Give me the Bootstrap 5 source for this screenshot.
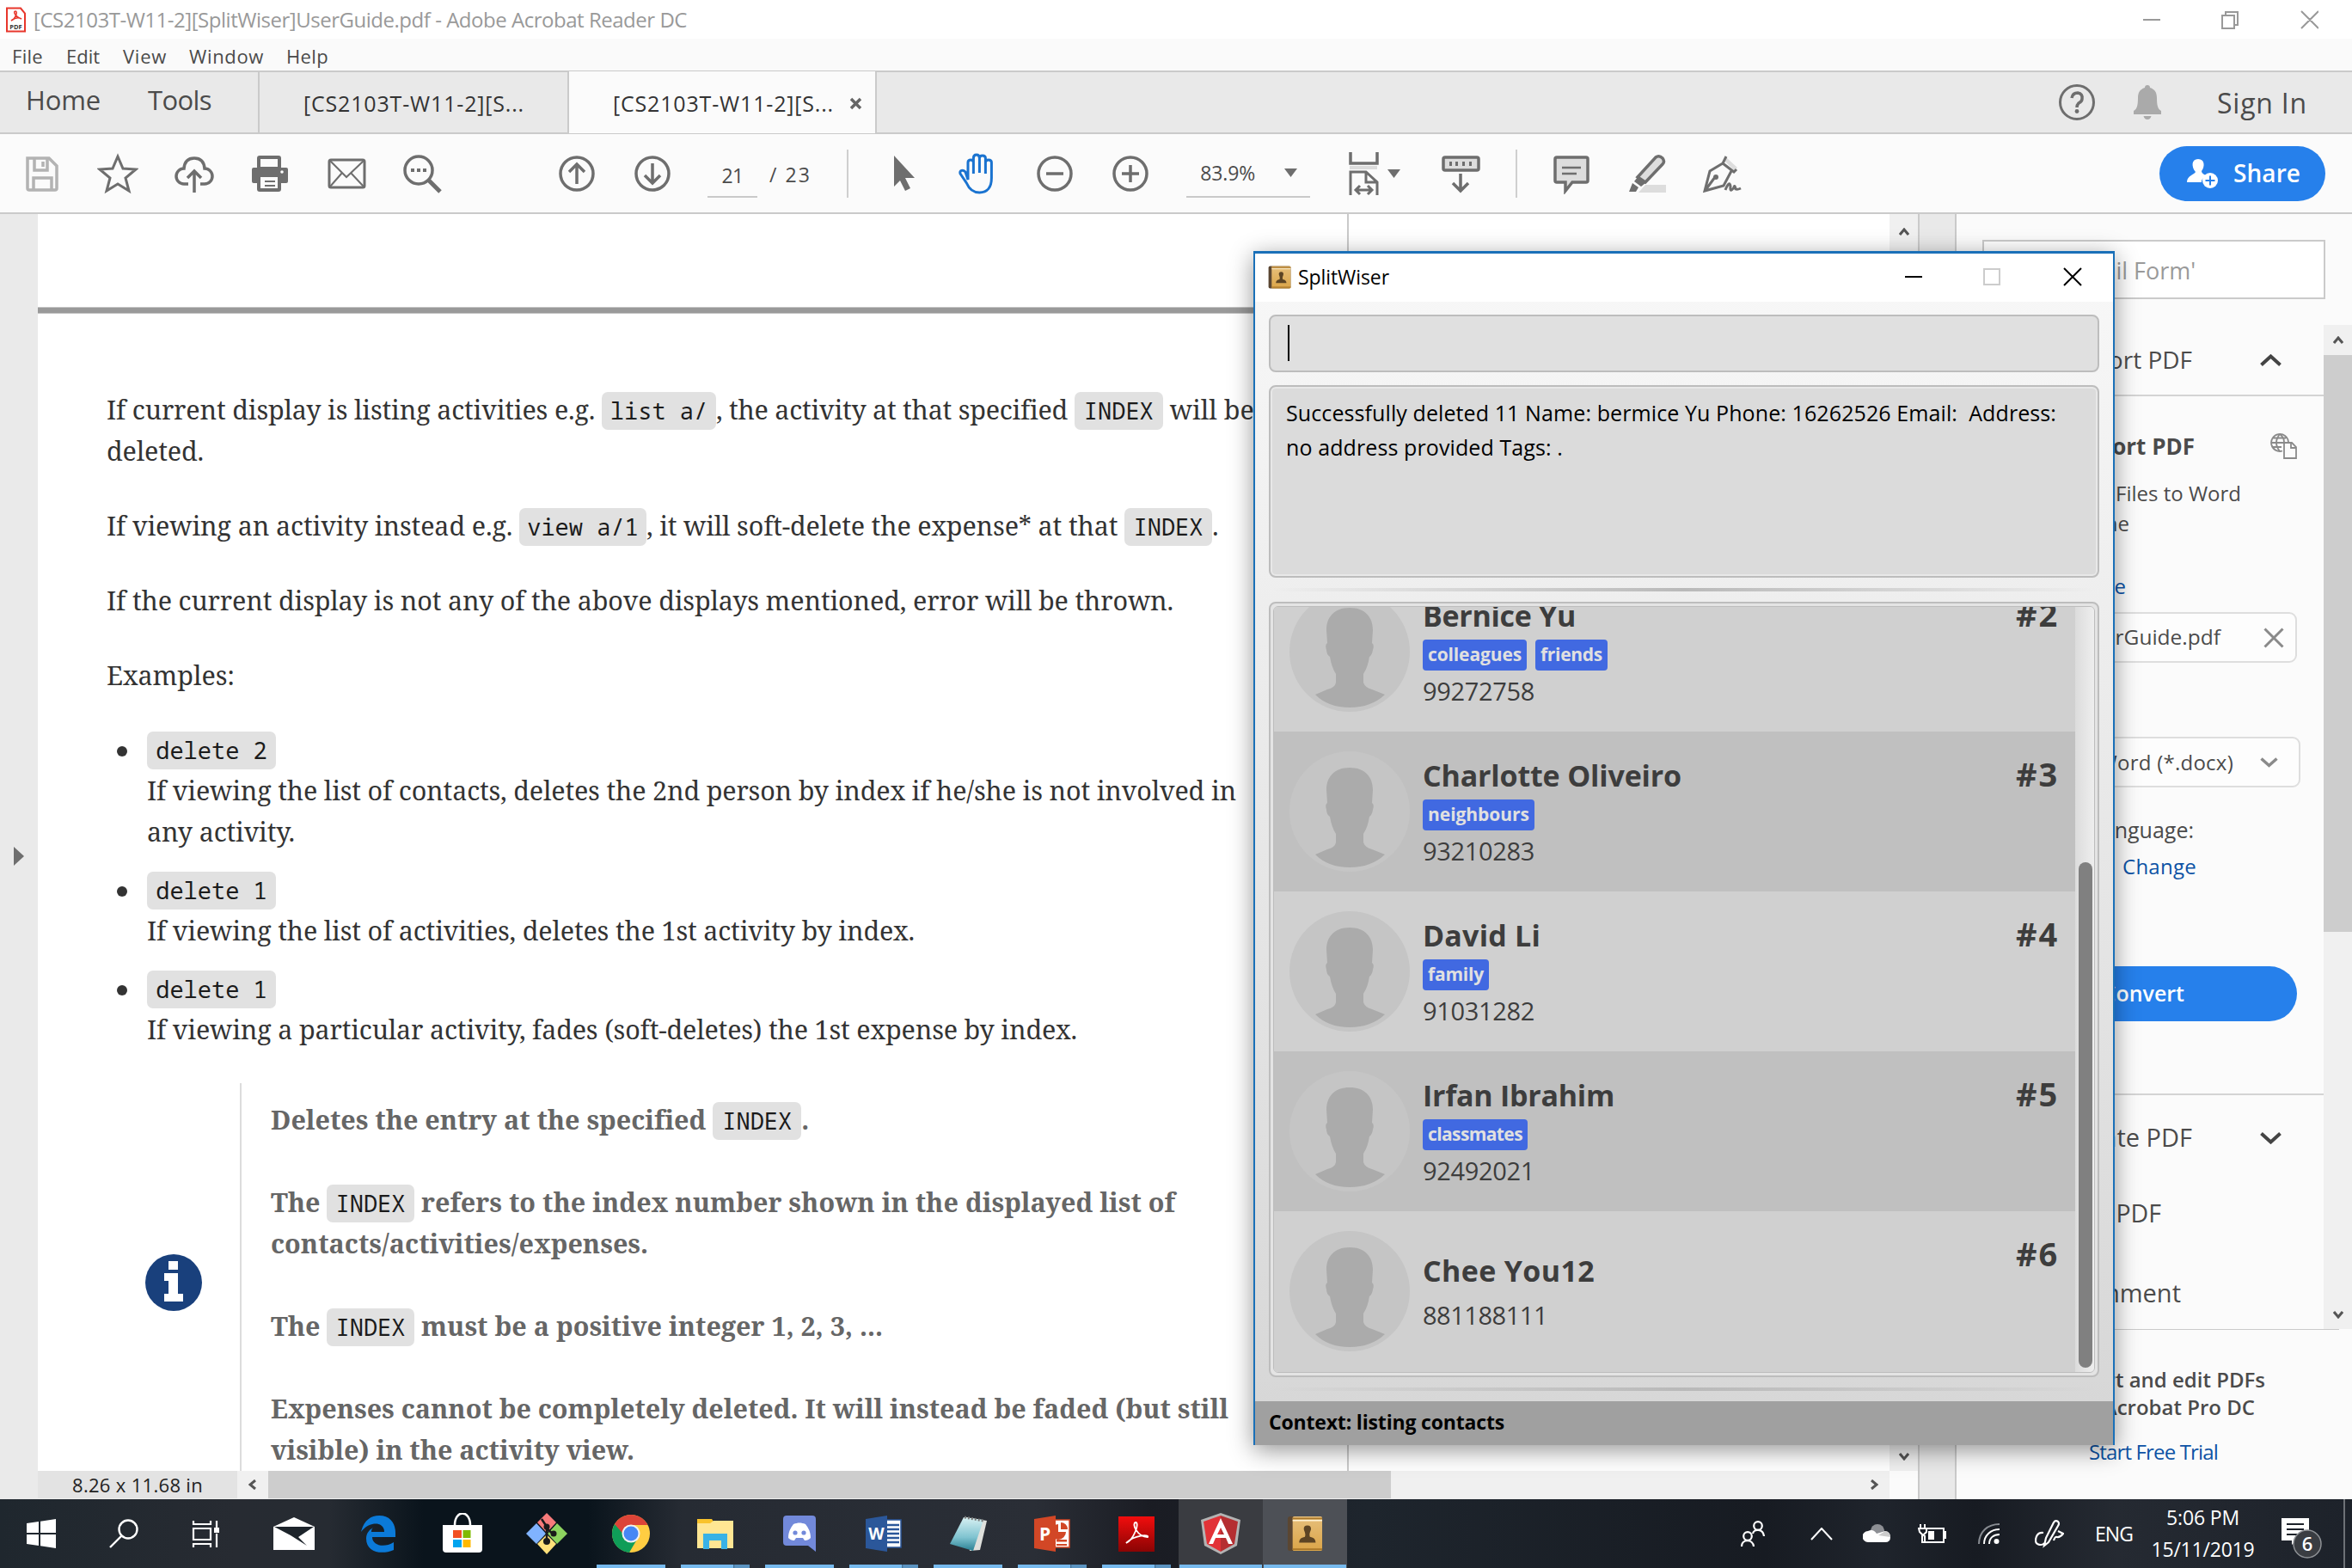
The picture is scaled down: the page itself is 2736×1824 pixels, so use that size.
<!DOCTYPE html>
<html lang="en">
<head>
<meta charset="utf-8">
<title>UserGuide.pdf - Adobe Acrobat Reader DC</title>
<link href="https://cdn.jsdelivr.net/npm/bootstrap@5.3.0/dist/css/bootstrap.min.css" rel="stylesheet">
<style>
html,body{height:1824px;width:2736px;overflow:hidden}
body{font-family:"Open Sans","Noto Sans",sans-serif;font-size:25px;color:#4b4b4b;background:#fbfbfb;line-height:1.4}
svg{display:block;flex:none}
[data-w],.nw{white-space:pre;display:inline-block}
.titlebar{height:45px;background:#fff;color:#999;padding-left:6px;font-size:24px}
.menus{height:39px;background:#fafafa;border-bottom:2px solid #cacaca;font-size:22px;padding:3px 0 0 14px;color:#4a4a4a}
.tabs{height:72px;background:#e9e9e9;border-bottom:2px solid #cacaca}
.homes{width:300px;font-size:31px;padding-left:30px;padding-bottom:4px;gap:55px}
.doctab{width:360px;border-left:2px solid #cacaca;font-size:25px;color:#333;height:72px;padding:3px 0 0 51px}
.doctab.on{background:#fbfbfb;border-right:2px solid #cacaca}
.tools{height:93px;background:#fbfbfb;border-bottom:2px solid #cacaca;padding-left:25px}
.grp{gap:40.4px}
.fld{border-bottom:2px solid #cacaca;height:57px;font-size:23px;line-height:62px}
.vline{width:2px;height:56px;background:#cfcfcf}
.share{width:193px;height:64px;border-radius:32px;background:#2680eb;color:#fff;font-weight:600;font-size:28px;margin-right:31px;padding-left:32px;gap:17px}
.mainrow{height:1495px}
.strip{width:44px;background:#eaeaea;padding:736px 0 0 16px}
.docw{width:2187px}
.paper{height:1462px;width:2154px;background:#fff;overflow:hidden}
.paperin{width:1525px;border-right:2px solid #cacaca;height:1462px}
.brk{height:8px;background:#999;border-top:1px solid #c4c4c4;border-bottom:1px solid #c4c4c4;margin-top:108px}
.prose{padding:89px 0 0 80px;font-family:"Noto Serif","DejaVu Serif Condensed","DejaVu Serif",serif;font-size:30.5px;color:#333}
.tl{height:48px;line-height:48px;display:flex;align-items:center;white-space:pre}
.tl>span:not(.kbdx){margin-top:-4px}
.para{margin-bottom:39px}
.kbdx{font-family:"Noto Sans Mono","DejaVu Sans Mono",monospace;font-size:27px;font-weight:400;color:#1b1b1b;background:#e1e1e1;border-radius:7px;height:44px;line-height:44px;text-align:center;display:inline-block;white-space:pre}
.item{padding-left:47px;margin-bottom:19px;position:relative}
.item::before{content:"";position:absolute;left:12px;top:19px;width:12px;height:12px;border-radius:50%;background:#333}
.note{margin-top:37px;gap:0}
.noteico{width:155px;padding:199px 0 0 45px}
.notetx{border-left:2px solid #dcdcdc;padding:20px 0 0 34px;font-weight:700;color:#666}
.notetx .para{margin-bottom:48px}
.vsb{width:33px;background:#f0f0f0;height:1462px;padding:16px 0 12px}
.hsb{height:33px;background:#f0f0f0;border-bottom:1px solid #eee}
.dims{width:232px;background:#e3e3e3;font-size:22px;color:#222;padding-left:40px}
.gut{width:45px;background:#e9e9e9;border:solid #cacaca;border-width:0 2px}
.rp{width:460px;background:#fbfbfb;color:#4b4b4b}
.srch{margin:30px 0 30px 30px;width:399px;height:69px;border:2px solid #cacaca;background:#fff;color:#9a9a9a;font-size:27px;line-height:68px;padding-right:160px;white-space:nowrap}
.acc{width:427px;height:1168px}
.ln{line-height:35px;font-size:24px;text-align:right;white-space:nowrap}
.lk{color:#0d53a5}
.bx{border:2px solid #dedede;border-radius:9px;background:#fdfdfd;font-size:24px}
.cv{height:64px;border-radius:32px;background:#2680eb;color:#fff;font-weight:600;font-size:25px;line-height:62px;text-align:right}
.sb2{width:33px;background:#f0f0f0}
.foot2{border-top:1px solid #cacaca;width:445px;padding-top:42px;font-weight:600}
/* floating application window */
.win{position:absolute;left:1458px;top:292px;width:1002px;height:1389px;border:2px solid #1a70b8;border-top-width:3px;border-bottom-width:3px;box-shadow:0 6px 26px rgba(0,0,0,.42);background:linear-gradient(#f8f8f8,#d6d6d6);color:#000}
.wt{height:56px;background:#fff;font-size:23px;padding:0 36px 2px 15px}
.cmd{margin:15px 16px 0;height:67px;border:2px solid #bdbdbd;border-radius:8px;background:#e0e0e0;padding:10px 0 0 20px}
.cmd i{display:block;width:2px;height:42px;background:#000}
.outp{margin:15px 16px 0;height:224px;border:2px solid #bdbdbd;border-radius:8px;background:#dbdbdb;box-shadow:inset 0 0 0 2px #e8e8e8;font-size:25px;line-height:40px;padding:10px 0 0 18px}
.dv{height:4px;background:linear-gradient(90deg,transparent 2%,#b9b9b9 50%,transparent 98%)}
.lst{margin:12px 16px 0;height:902px;border:2px solid #bdbdbd;border-radius:8px;background:#e4e4e4;padding:3px}
.lin{height:892px;border:1px solid #bdbdbd;border-radius:6px;overflow:hidden}
.cells{width:934px;display:flex;flex-direction:column;justify-content:flex-end;padding-bottom:1px;background:#d0d0d0}
.cellx{height:186px;flex:none;padding-left:18px;background:#d0d0d0;color:#3d3d3d}
.cellx.alt{background:#c0c0c0}
.inf{margin-left:15px;width:690px;padding-top:31px}
.nm{font-weight:700;font-size:34px;line-height:40px;height:40px}
.tg{background:#4169e1;color:#e0e0e0;border-radius:4px;font-weight:700;font-size:21px;height:36px;line-height:34px;padding:0 6px}
.ph{font-size:29px;line-height:40px;margin-top:4px}
.idx{font-weight:700;font-size:38px;line-height:40px;padding-top:29px}
.thumb{width:16px;margin:297px 0 0 4px;height:588px;border-radius:8px;background:#808080}
.trk{width:22px;background:linear-gradient(90deg,#dcdcdc,#eee)}
.stat{height:51px;margin-top:12px;background:#a0a0a0;font-weight:700;font-size:23px;line-height:49px;padding-left:16px}
/* taskbar */
.tb{height:80px;color:#fff;background:linear-gradient(90deg,#1f272e 0,#272b32 10%,#262b32 14%,#0a141c 18%,#0a141c 25%,#262b33 29%,#2a2e36 44%,#1a1c23 49%,#1e252d 58%,#171b22 75%,#1f242c 80%,#171b22 84%,#252a32 90%,#1d222a 100%)}
.t1{width:96px}.t2{width:98px;position:relative}
.t1,.t2{height:80px;display:flex;align-items:center;justify-content:center}
.run::after{content:"";position:absolute;left:9px;bottom:0;width:80px;height:4px;background:#76b9ed}
.multi::after{background:linear-gradient(90deg,#76b9ed 61px,#3f678a 61px,#5b93c0 63px)}
.act::after{left:1px;width:96px}
.clock{font-size:23px;line-height:37px;text-align:center;width:121px}
</style>
<script src="https://cdn.jsdelivr.net/npm/bootstrap@5.3.0/dist/js/bootstrap.bundle.min.js"></script>
</head>
<body class="d-flex flex-column">
<svg width="0" height="0" class="position-absolute"><defs>
<symbol id="up" viewBox="0 0 12 10"><path d="M1 8l5-6 5 6" fill="none" stroke="#555" stroke-width="3"/></symbol>
<symbol id="ava" viewBox="0 0 140 140"><circle cx="70" cy="70" r="70" fill="#c5c5c5"/><path fill="#ababab" d="M70 19C88 19 97 30 97 45L96 60Q99 62 97 68Q96 74 93 76Q91 88 87 94L86 96V106Q88 112 96 114L111 120Q95 135 70 135Q45 135 30 120L44 114Q53 112 54 106V96Q49 88 47 76Q43 73 43 68Q41 62 44 60L43 45C43 30 52 19 70 19Z"/></symbol>
<linearGradient id="gold" x2="0" y2="1"><stop stop-color="#e6bf7c"/><stop offset="1" stop-color="#dba548"/></linearGradient>
<symbol id="book" viewBox="0 0 44 44"><rect x="1" y="1" width="42" height="42" rx="3" fill="#5a4632"/><rect x="7" y="1" width="36" height="42" rx="2" fill="url(#gold)"/><path d="M7 3.500h36M7 41h36" stroke="#a8772a" stroke-width="2"/><path d="M7 6h36" stroke="#fff3d5" stroke-width="1.500"/><path fill="#5c4424" d="M25 12c4 0 5 3 4 6-1 3-2 4-1 8 5 1 7 3 7 7H15c0-4 2-6 7-7 1-4 0-5-1-8-1-3 0-6 4-6z"/></symbol>
</defs></svg>

<header class="titlebar d-flex align-items-center">
 <svg width="25" height="30" viewBox="0 0 25 30"><path d="M2 1.500h16l5 6v21H2z" fill="#fff" stroke="#e8372c" stroke-width="2"/><path d="M7 16c5-2 8-11 5-11s-1 6 7 9c-3-2-8-1-12 2z" fill="none" stroke="#e8372c" stroke-width="1.600"/><text x="12.500" y="26" font-size="7.500" font-weight="700" text-anchor="middle" fill="#333">PDF</text></svg>
 <span data-w="760" style="margin-left:8px">[CS2103T-W11-2][SplitWiser]UserGuide.pdf - Adobe Acrobat Reader DC</span>
 <svg class="ms-auto" style="margin-right:39px" width="204" height="22" viewBox="0 0 204 22" fill="none" stroke="#999" stroke-width="2"><path d="M0 11h20M92 6h14v15H92zM96 6V2h14v15h-4M184 1l20 20M204 1l-20 20"/></svg>
</header>
<nav class="menus d-flex align-items-center"><span data-w="36">File</span><span data-w="39" style="margin-left:27px">Edit</span><span data-w="51" style="margin-left:27px">View</span><span data-w="87" style="margin-left:26px">Window</span><span data-w="49" style="margin-left:26px">Help</span></nav>
<div class="tabs d-flex align-items-center">
 <div class="homes d-flex"><span data-w="87">Home</span><span data-w="74">Tools</span></div>
 <div class="doctab d-flex align-items-center"><span data-w="257">[CS2103T-W11-2][S...</span></div>
 <div class="doctab on d-flex align-items-center"><span data-w="257">[CS2103T-W11-2][S...</span><svg style="margin-left:18px" width="15" height="15" viewBox="0 0 15 15"><path d="M2 2l11 11M13 2L2 13" stroke="#666" stroke-width="3.500"/></svg></div>
 <svg class="ms-auto" width="44" height="44" viewBox="0 0 44 44"><circle cx="22" cy="22" r="19.500" fill="none" stroke="#6e6e6e" stroke-width="3"/><path d="M16 17q1-6 7-6 6 1 5 7 0 3-4 5-2 2-2 5" fill="none" stroke="#6e6e6e" stroke-width="3.500"/><circle cx="22" cy="32.500" r="2.400" fill="#6e6e6e"/></svg>
 <svg style="margin-left:43px" width="34" height="42" viewBox="0 0 34 42" fill="#aaa"><path d="M14 4q0-3 3-3t3 3c6 2 8 6 8 12 0 8 1 13 5 15v4H1v-4c4-2 5-7 5-15 0-6 2-10 8-12zM12.500 37h9q-1 4-4.500 4t-4.500-4z"/></svg>
 <span data-w="105" style="font-size:32px;margin:2px 52px 0 64px">Sign In</span>
</div>
<div class="tools d-flex align-items-center">
 <div class="d-flex grp">
 <svg width="48" height="48" viewBox="0 0 48 48" fill="none" stroke="#b3b3b3" stroke-width="3.500"><path d="M7 6h25l9 9v26q0 2-2 2H9q-2 0-2-2z"/><path d="M15 6v14h15V6M14 43V29h21v14"/><path d="M25 10v6"/></svg>
 <svg width="48" height="48" viewBox="0 0 48 48" fill="none" stroke="#6e6e6e" stroke-width="3"><path d="M24 4l6 14 15 1-12 10 4 15-13-8-13 8 4-15L3 19l15-1z"/></svg>
 <svg width="48" height="48" viewBox="0 0 48 48" fill="none" stroke="#6e6e6e" stroke-width="3.500"><path d="M17 36h-5a9 9 0 0 1 0-18q1-12 12-12t12 12a9 9 0 0 1 0 18h-5M24 46V22M16 29l8-8 8 8"/></svg>
 <svg width="48" height="48" viewBox="0 0 48 48" fill="#6e6e6e"><path d="M9 18V6q0-3 3-3h22q3 0 3 3v12zm4-2h20V7H13z" fill-rule="evenodd"/><path d="M5 17h38q2 0 2 2v14q0 2-2 2h-6v7q0 3-3 3H12q-3 0-3-3v-7H5q-2 0-2-2V19q0-2 2-2z"/><path d="M13 28h20v13H13z" fill="#fbfbfb"/><path d="M18 33h12M18 38h12" stroke="#6e6e6e" stroke-width="2"/><circle cx="38" cy="22" r="1.800" fill="#fff"/></svg>
 <svg width="48" height="48" viewBox="0 0 48 48" fill="none" stroke="#6e6e6e" stroke-width="3"><rect x="4" y="8" width="41" height="32" rx="2"/><path d="M5 9l19 19L44 9M5 39l14-16M44 39L29 23" stroke-width="2"/></svg>
 <svg width="48" height="48" viewBox="0 0 48 48" fill="none" stroke="#6e6e6e"><circle cx="20" cy="20" r="16" stroke-width="3.500"/><path d="M31 31l14 14" stroke-width="5"/><path d="M11 20h4M18 20h4M25 20h4" stroke-width="4"/></svg>
 </div>
 <div class="d-flex" style="margin-left:132px;gap:40px">
 <svg width="48" height="48" viewBox="0 0 48 48" fill="none" stroke="#6e6e6e" stroke-width="3.500"><circle cx="24" cy="24" r="19"/><path d="M24 36V14M15 22l9-9 9 9"/></svg>
 <svg width="48" height="48" viewBox="0 0 48 48" fill="none" stroke="#6e6e6e" stroke-width="3.500"><circle cx="24" cy="24" r="19"/><path d="M24 12v22M15 26l9 9 9-9"/></svg>
 </div>
 <div class="fld text-center" style="width:58px;margin-left:40px"><span data-w="25">21</span></div>
 <div style="margin:4px 0 0 14px;font-size:23px" data-w="49">/ 23</div>
 <div class="vline" style="margin-left:41px"></div>
 <div class="d-flex grp" style="margin-left:39px">
 <svg width="48" height="48" viewBox="0 0 48 48" fill="#6e6e6e"><path d="M14 3l24 26H27l6 12-6 3-6-12-7 7z"/></svg>
 <svg width="48" height="48" viewBox="0 0 48 48" fill="none" stroke="#1a73d0" stroke-width="3"><path d="M13 29V10q0-3 3-3t3 3v14M19 24V6q0-4 3.500-4T26 6v17M26 23V7q0-3 3.500-3T33 7v18M33 25V13q0-3 3-3 4 0 4 4-1 8 3 0v15c1 12-5 18-15 18-8 0-12-4-15-11L4 25c-1-4 3-6 6-2l5 8" style="display:none"/><path d="M12 30V11q0-3 3-3t3 3v13M18 22V6q0-4 3.500-4T25 6v17M25 20V6q0-3 3.500-3T32 6v18M32 22V11q0-3 3.500-3T39 11q2 0 5 0" style="display:none"/><path d="M12 31V11q0-3 3.200-3t3.200 3v13V6q0-4 3.500-4t3.500 4v17V6q0-3 3.500-3t3.500 3v18V11q0-3 3.500-3t3.500 3v18c0 11-5 17-14 17-8 0-12-4-15-11L3 24c-1-4 3-5 6-2z"/></svg>
 <svg width="48" height="48" viewBox="0 0 48 48" fill="none" stroke="#6e6e6e" stroke-width="3.500"><circle cx="24" cy="24" r="19"/><path d="M14 24h20"/></svg>
 <svg width="48" height="48" viewBox="0 0 48 48" fill="none" stroke="#6e6e6e" stroke-width="3.500"><circle cx="24" cy="24" r="19"/><path d="M14 24h20M24 14v20"/></svg>
 </div>
 <div class="fld d-flex align-items-center" style="width:144px;margin-left:41px;padding-left:16px"><span data-w="64">83.9%</span><svg style="margin-left:34px" width="15" height="10" viewBox="0 0 15 10"><path d="M0 0h15L7.500 10z" fill="#6e6e6e"/></svg></div>
 <svg style="margin-left:38px" width="48" height="52" viewBox="0 0 48 52" fill="none" stroke="#6e6e6e" stroke-width="3.500"><path d="M9 1v13h31V1"/><path d="M8 19h32" stroke="#dcdcdc" stroke-width="4"/><path d="M9 51V24h18l13 12v15M27 24v12h12M15 45h19M20 40l-5 5 5 5M29 40l5 5-5 5" stroke-width="3"/></svg>
 <svg style="margin-left:4px" width="15" height="10" viewBox="0 0 15 10"><path d="M0 0h15L7.500 10z" fill="#6e6e6e"/></svg>
 <svg style="margin-left:46px" width="48" height="48" viewBox="0 0 48 48" fill="none" stroke="#6e6e6e" stroke-width="3.500"><rect x="4" y="5" width="41" height="15" rx="2" fill="#ddd"/><path d="M11 12.500h3M18 12.500h3M26 12.500h3M34 12.500h3" stroke-width="5"/><path d="M24 24v19M15 35l9 9 9-9"/></svg>
 <div class="vline" style="margin-left:40px"></div>
 <div class="d-flex" style="margin-left:39px;gap:40px">
 <svg width="48" height="48" viewBox="0 0 48 48" fill="#ddd" stroke="#6e6e6e" stroke-width="3.500"><path d="M7 5h34q2 0 2 2v25q0 2-2 2H25l-8 10V34H7q-2 0-2-2V7q0-2 2-2z"/><path d="M13 17h22M13 24h17" stroke-width="2.500"/></svg>
 <svg width="48" height="48" viewBox="0 0 48 48" fill="#ddd" stroke="#6e6e6e" stroke-width="3.500"><path d="M14 46l8-9h24v9z" stroke="none"/><path d="M13 28L34 5q4-3 8 1 3 4 0 7L22 34z"/><path d="M13 28l9 7-5 4-8-6zM7 35l7 5-3 5H3z" fill="#6e6e6e" stroke="none"/></svg>
 <svg width="48" height="48" viewBox="0 0 48 48" fill="none" stroke="#6e6e6e" stroke-width="3"><path d="M28 5l13 12-4 3L26 9z" fill="#ddd" stroke="none"/><path d="M28 4l-4 8 13 10 3-3M24 12L9 21 3 44l22-6 9-17M4 43l11-15" /><circle cx="16" cy="28" r="3" fill="#6e6e6e" stroke="none"/><path d="M27 43q5-12 6-4-1 8 4 1 1-4 2 2 2 1 6-1"/></svg>
 </div>
 <div class="share ms-auto d-flex align-items-center"><svg width="37" height="36" viewBox="0 0 37 36" fill="#fff"><path d="M13 1c8 0 8 9 4 14 0 3 4 4 6 6-5 2-6 4-6 7H0c0-8 9-9 10-12C5 10 5 1 13 1z"/><circle cx="27" cy="26" r="9"/><path d="M27 20.500v11M21.500 26h11" stroke="#2680eb" stroke-width="2"/></svg><span data-w="78">Share</span></div>
</div>

<main class="mainrow d-flex">
 <div class="strip"><svg width="12" height="22" viewBox="0 0 12 22"><path d="M0 0l12 11L0 22z" fill="#6e6e6e"/></svg></div>
 <div class="docw">
  <div class="d-flex">
  <div class="paper"><div class="paperin overflow-hidden"><div class="brk"></div>
   <article class="prose">
    <div class="para"><div class="tl"><span data-w="576">If current display is listing activities e.g. </span><span class="kbdx" style="width:133px">list a/</span><span data-w="416">, the activity at that specified </span><span class="kbdx" style="width:103px">INDEX</span><span data-w="106"> will be</span></div><div class="tl"><span data-w="113">deleted.</span></div></div>
    <div class="para tl"><span data-w="480">If viewing an activity instead e.g. </span><span class="kbdx" style="width:148px">view a/1</span><span data-w="556">, it will soft-delete the expense* at that </span><span class="kbdx" style="width:102px">INDEX</span><span>.</span></div>
    <div class="para tl"><span data-w="1241">If the current display is not any of the above displays mentioned, error will be thrown.</span></div>
    <div class="tl" style="margin-bottom:38px"><span data-w="149">Examples:</span></div>
    <div class="item"><div class="tl"><span class="kbdx" style="width:150px">delete 2</span></div><div class="tl"><span data-w="1267">If viewing the list of contacts, deletes the 2nd person by index if he/she is not involved in</span></div><div class="tl"><span data-w="172">any activity.</span></div></div>
    <div class="item"><div class="tl"><span class="kbdx" style="width:150px">delete 1</span></div><div class="tl"><span data-w="893">If viewing the list of activities, deletes the 1st activity by index.</span></div></div>
    <div class="item mb-0"><div class="tl"><span class="kbdx" style="width:150px">delete 1</span></div><div class="tl"><span data-w="1082">If viewing a particular activity, fades (soft-deletes) the 1st expense by index.</span></div></div>
    <div class="note d-flex"><div class="noteico"><svg width="66" height="66" viewBox="0 0 66 66"><circle cx="33" cy="33" r="33" fill="#19407c"/><path fill="#fff" d="M27 8h11v10H27zM22 22h16v24h6v9H22v-9h5V31h-5z"/></svg></div>
     <div class="notetx">
      <div class="para tl"><span data-w="513">Deletes the entry at the specified </span><span class="kbdx" style="width:103px">INDEX</span><span>.</span></div>
      <div class="para"><div class="tl"><span data-w="65">The </span><span class="kbdx" style="width:102px">INDEX</span><span data-w="885"> refers to the index number shown in the displayed list of</span></div><div class="tl"><span data-w="439">contacts/activities/expenses.</span></div></div>
      <div class="para tl"><span data-w="65">The </span><span class="kbdx" style="width:102px">INDEX</span><span data-w="545"> must be a positive integer 1, 2, 3, ...</span></div>
      <div><div class="tl"><span data-w="1114">Expenses cannot be completely deleted. It will instead be faded (but still</span></div><div class="tl"><span data-w="423">visible) in the activity view.</span></div></div>
     </div></div>
   </article></div></div>
  <div class="vsb d-flex flex-column align-items-center justify-content-between"><svg width="12" height="10"><use href="#up"/></svg><svg width="12" height="10" style="transform:scaleY(-1)"><use href="#up"/></svg></div>
  </div>
  <div class="d-flex">
   <div class="hsb d-flex" style="width:2154px"><div class="dims d-flex align-items-center"><span data-w="152">8.26 x 11.68 in</span></div>
    <div class="d-flex align-items-center justify-content-center" style="width:36px"><svg width="12" height="10" style="transform:rotate(-90deg)"><use href="#up"/></svg></div>
    <div style="width:1306px;background:#cdcdcd"></div>
    <div class="ms-auto d-flex align-items-center justify-content-center" style="width:36px"><svg width="12" height="10" style="transform:rotate(90deg)"><use href="#up"/></svg></div></div>
  </div>
 </div>
 <div class="gut"></div>
 <aside class="rp">
  <div class="srch text-end">Search 'Email Form'</div>
  <div class="d-flex">
   <div class="acc">
    <div class="d-flex align-items-center justify-content-end" style="height:83px;border-bottom:2px solid #d4d4d4;font-size:28px;padding-right:49px">Export PDF<svg style="margin-left:79px" width="25" height="14" viewBox="0 0 25 14"><path d="M1.500 12.500l11-10 11 10" fill="none" stroke="#444" stroke-width="4"/></svg></div>
    <div class="d-flex align-items-center justify-content-end fw-bold" style="height:40px;margin-top:38px;font-size:26px;padding-right:31px">Export PDF<svg style="margin-left:88px" width="31" height="30" viewBox="0 0 31 30" fill="none" stroke="#8a8a8a" stroke-width="1.800"><path d="M14 20.500A10 10 0 1 1 21 10M1 11h18M3 5.500h15M3 16h10M11 1q-8 10 0 20M11 1q5 4 5 9"/><path d="M16 11h9l5 5v13H16z" fill="#fbfbfb"/><path d="M24 11v6h6"/></svg></div>
    <div class="ln" style="margin-top:17px;padding-right:96px">Convert PDF Files to Word</div>
    <div class="ln" style="padding-right:226px">or Excel Online</div>
    <div class="ln lk" style="margin-top:38px;padding-right:230px">Learn more</div>
    <div class="bx d-flex align-items-center justify-content-end" style="height:59px;margin:13px 31px 0 30px;padding-right:13px;font-size:24.500px">...UserGuide.pdf<svg style="margin-left:50px" width="24" height="24" viewBox="0 0 24 24"><path d="M1.500 1.500l21 21M22.500 1.500l-21 21" stroke="#8a8a8a" stroke-width="3"/></svg></div>
    <div class="bx d-flex align-items-center justify-content-end" style="height:59px;margin:86px 27px 0 30px;padding-right:24px"><span data-w="272">Microsoft Word (*.docx)</span><svg style="margin-left:31px" width="21" height="12" viewBox="0 0 21 12"><path d="M1.500 1.500l9 8 9-8" fill="none" stroke="#8a8a8a" stroke-width="3.500"/></svg></div>
    <div class="ln" style="margin-top:32px;padding-right:151px;font-size:25px">Document Language:</div>
    <div class="ln" style="margin-top:7px;padding-right:148px">English (U.S.)<span class="lk" data-w="86" style="margin-left:16px">Change</span></div>
    <div class="cv" style="margin:99px 31px 0 30px;padding-right:131px">Convert</div>
    <div class="d-flex align-items-center justify-content-end" style="height:101px;margin-top:84px;border-top:2px solid #d4d4d4;font-size:29px;padding-right:49px">Create PDF<svg style="margin-left:79px" width="25" height="14" viewBox="0 0 25 14"><path d="M1.500 1.500l11 10 11-10" fill="none" stroke="#444" stroke-width="4"/></svg></div>
    <div class="text-end" style="height:79px;line-height:77px;font-size:28.500px;padding-right:189px">Edit PDF</div>
    <div class="text-end" style="height:92px;line-height:104px;font-size:29px;padding-right:166px">Comment</div>
   </div>
   <div class="sb2 d-flex flex-column align-items-center" style="padding-top:13px"><svg width="12" height="10"><use href="#up"/></svg><div style="width:33px;height:671px;background:#cdcdcd;margin-top:12px"></div><svg width="12" height="10" style="transform:scaleY(-1);margin-top:auto;margin-bottom:12px"><use href="#up"/></svg></div>
  </div>
  <div class="foot2">
   <div class="ln" style="line-height:32px;padding-right:86px">Convert and edit PDFs</div>
   <div class="ln" style="line-height:32px;padding-right:98px">with Acrobat Pro DC</div>
   <div class="ln lk fw-normal" style="line-height:32px;margin-top:20px;padding-right:141px"><span data-w="150">Start Free Trial</span></div>
  </div>
 </aside>
</main>

<footer class="tb d-flex align-items-center">
 <div class="t1"><svg width="34" height="34" viewBox="0 0 34 34" fill="#fff"><path d="M0 5l14-2v13H0zM16 2.700L34 0v16H16zM0 18h14v13L0 29zM16 18h18v16l-18-2.700z"/></svg></div>
 <div class="t1"><svg width="34" height="34" viewBox="0 0 34 34" fill="none" stroke="#fff" stroke-width="2.400"><circle cx="22" cy="12" r="10.500"/><path d="M14.500 19.500L1 33"/></svg></div>
 <div class="t1"><svg width="34" height="34" viewBox="0 0 34 34" fill="none" stroke="#fff" stroke-width="2.200"><path d="M2 2v4h20V2M2 11h20v13H2zM2 33v-4h20v4M29 2v8M29 17v16"/><path d="M26 10h6v6h-6z" fill="#fff" stroke="none"/></svg></div>
 <div class="t2" style="margin-left:5px"><svg width="48" height="40" viewBox="0 0 48 40"><path d="M0 12L24 1l24 11v27H0z" fill="#fff"/><path d="M1 12h46L29 24l10 10-19-12z" fill="#1d242b"/></svg></div>
 <div class="t2"><svg width="42" height="44" viewBox="0 0 42 44"><path fill="#0b7ad8" d="M1 20C4 7 12 1 22 1c13 0 19 9 19 20v5H14c0 10 14 13 25 6v9c-14 6-32 3-32-13 0-6 3-10 8-13-2 2-2 4-2 5h15c0-12-17-13-27 0z"/></svg></div>
 <div class="t2"><svg width="48" height="48" viewBox="0 0 48 48"><path d="M15 14c0-18 18-18 18 0" fill="none" stroke="#fff" stroke-width="2.500"/><path d="M1 14h46v28q0 4-4 4H5q-4 0-4-4z" fill="#fff"/><path fill="#f25022" d="M13 20h10v9H13z"/><path fill="#7fba00" d="M24.500 20h9v9h-9z"/><path fill="#00a4ef" d="M13 31h10v9H13z"/><path fill="#ffb900" d="M24.500 31h9v9h-9z"/></svg></div>
 <div class="t2"><svg width="48" height="48" viewBox="0 0 48 48"><path fill="#f77b7b" d="M24 0l11 11-11 12L13 11z"/><path fill="#80b3ff" d="M12 12l11 12-11 12L0 24z"/><path fill="#8dd35f" d="M36 12l12 12-12 12-11-12z"/><path fill="#ffe07a" d="M24 25l11 11-11 12-11-12z"/><path d="M18 7l6 9v16M24 18l8 7" stroke="#1a1a1a" stroke-width="2.500" fill="none"/><g fill="#1a1a1a"><circle cx="24" cy="16" r="3.500"/><circle cx="24" cy="33" r="4"/><circle cx="32" cy="24" r="3.500"/></g></svg></div>
 <div class="t2 run"><svg width="44" height="44" viewBox="0 0 44 44"><circle cx="22" cy="22" r="22" fill="#ffcd42"/><path fill="#dc4438" d="M3 11A22 22 0 0 1 41 11L41 12H22l-9 15z"/><path fill="#0f9d58" d="M3 11A22 22 0 0 0 20 44l10-17-14-1z"/><circle cx="22" cy="22" r="10.500" fill="#f1f1f1"/><circle cx="22" cy="22" r="8.500" fill="#4687f4"/></svg></div>
 <div class="t2 run multi"><svg width="42" height="36" viewBox="0 0 42 36"><path fill="#f9c32c" d="M0 1h17l4 6H0z"/><path fill="#ffe693" d="M0 6h15l4-3h23v32H0z"/><path fill="#39b2e6" d="M7 18h28v18h-7V26H14v10H7z"/></svg></div>
 <div class="t2 run"><svg width="38" height="42" viewBox="0 0 38 42"><path fill="#7289da" d="M4 0h30q4 0 4 4v38l-9-7H4q-4 0-4-4V4q0-4 4-4z"/><path fill="#fff" d="M12 10c5-2 9-2 14 0 4 5 6 10 6 16-2 2-4 3-7 3l-2-3h-8l-2 3c-3 0-5-1-7-3 0-6 2-11 6-16z"/><circle cx="14" cy="20" r="2.600" fill="#7289da"/><circle cx="24" cy="20" r="2.600" fill="#7289da"/></svg></div>
 <div class="t2 run multi"><svg width="42" height="42" viewBox="0 0 42 42"><path fill="#fff" stroke="#2b579a" stroke-width="1.500" d="M22 5h19v32H22z"/><path d="M25 11h14M25 16h14M25 21h14M25 26h14M25 31h14" stroke="#2b579a" stroke-width="2.500"/><path fill="#2b579a" d="M0 4l25-4v42L0 38z"/><text x="12.500" y="28" font-size="19" font-weight="700" fill="#fff" text-anchor="middle">W</text></svg></div>
 <div class="t2 run"><svg width="44" height="42" viewBox="0 0 44 42"><defs><linearGradient id="pad" x2="0" y2="1"><stop stop-color="#d8f1f3"/><stop offset=".6" stop-color="#7fc3d0"/><stop offset="1" stop-color="#2a8093"/></linearGradient></defs><path fill="#dfe0dc" d="M20 2l24 4-8 34-12 1z"/><path fill="url(#pad)" d="M17 2l23 3-12 36L1 33z"/><path d="M18 2l22 4" stroke="#777" stroke-width="3" stroke-dasharray="2 2"/></svg></div>
 <div class="t2 run multi"><svg width="42" height="42" viewBox="0 0 42 42"><path fill="#fff" stroke="#d24726" stroke-width="1.500" d="M22 5h19v32H22z"/><path fill="#d24726" d="M28 10v9h9a9 9 0 1 1-9-9zM31 8a8 8 0 0 1 8 8h-8zM26 28h12v2.500H26zM26 33h12v2H26z"/><path fill="#d24726" d="M0 4l25-4v42L0 38z"/><text x="12.500" y="29" font-size="21" font-weight="700" fill="#fff" text-anchor="middle">P</text></svg></div>
 <div class="t2 run multi"><svg width="42" height="41" viewBox="0 0 42 41"><defs><linearGradient id="acro" x2="0" y2="1"><stop stop-color="#f20d0d"/><stop offset="1" stop-color="#8a0404"/></linearGradient></defs><rect width="42" height="41" fill="url(#acro)"/><path d="M9 31c9-4 16-24 11-24-5 1 2 17 14 17 2-3-15-3-25 7z" fill="none" stroke="#fff" stroke-width="1.800"/></svg></div>
 <div class="t2 run act" style="background:#3a3c41"><svg width="48" height="48" viewBox="0 0 48 48"><path fill="#b3b3b3" d="M24 0l23 8-4 30-19 10L5 38 1 8z"/><path fill="#e23237" d="M24 3L4 10l4 26 16 9z"/><path fill="#b52e31" d="M24 3l20 7-4 26-16 9z"/><path fill="#fff" fill-rule="evenodd" d="M24 6l14 30h-5l-3-7H18l-3 7h-5zm0 11l-4 8h8z"/></svg></div>
 <div class="t2 run act" style="background:#4d5056"><svg width="44" height="42"><use href="#book"/></svg></div>
 <svg style="margin-left:458px" width="28" height="31" viewBox="0 0 28 31" fill="none" stroke="#fff" stroke-width="2.200"><circle cx="20" cy="6" r="4.800"/><path d="M27 18c-1-9-12-9-13-3"/><circle cx="8" cy="18" r="4.800"/><path d="M1 30c0-9 13-9 14 0"/></svg>
 <svg style="margin-left:53px" width="26" height="15" viewBox="0 0 26 15"><path d="M1 14L13 1l12 13" fill="none" stroke="#fff" stroke-width="2"/></svg>
 <svg style="margin-left:35px" width="33" height="22" viewBox="0 0 33 22"><circle cx="17" cy="8" r="8" fill="#8d8f94"/><path d="M6 21a6 6 0 0 1 0-13q6-3 10 3l10-3q6 1 6 7 0 6-6 6z" fill="#fff"/><path d="M18 13l8-5q6 1 6 7z" fill="#ccc"/></svg>
 <svg style="margin-left:31px" width="33" height="23" viewBox="0 0 33 23" fill="none" stroke="#fff" stroke-width="2"><path d="M10 5h20v16H8V13M30 9h2v7h-2M3 0v5M8 0v5M1 5h9v4q-4 4-4 4t-4-4zM5 13v8h4"/><path d="M12 8h7v10h-7z" fill="#fff" stroke="none"/></svg>
 <svg style="margin-left:37px" width="26" height="26" viewBox="0 0 26 26" fill="none" stroke="#fff" stroke-width="2"><path d="M1 25C1 11 11 2 25 2" stroke="#888c92"/><path d="M7 25C7 15 15 8 25 8M13 25c0-7 5-11 12-11"/><circle cx="21.500" cy="22" r="3" fill="#fff" stroke="none"/></svg>
 <svg style="margin-left:40px" width="34" height="34" viewBox="0 0 34 34" fill="none" stroke="#fff" stroke-width="2.200"><path d="M11 31l2-9L22 4q2-3 5-1 2 2 0 5L16 27zM10 16c-7-1-9 5-9 9 0 6 8 6 10 3M22 25c3-9 4 1 11-8l-6-3"/></svg>
 <span data-w="44" style="font-size:23px;margin-left:36px">ENG</span>
 <div class="clock" style="margin-left:21px"><div><span data-w="85">5:06 PM</span></div><div><span data-w="120">15/11/2019</span></div></div>
 <svg style="margin:10px 0 0 31px" width="48" height="50" viewBox="0 0 48 50"><path fill="#fff" d="M0 2h32v26H17l-5 5v-5H0z"/><path d="M6 9h20M6 15h20M6 21h14" stroke="#1d222a" stroke-width="2.200"/><circle cx="30" cy="32" r="16" fill="#3a3d42" stroke="#8f9296" stroke-width="1.500"/><text x="30" y="40" font-size="22" font-weight="600" fill="#fff" text-anchor="middle">6</text></svg>
 <div class="ms-auto" style="width:2px;height:80px;background:#6d7176;margin-right:8px"></div>
</footer>

<section class="win">
 <div class="wt d-flex align-items-center"><svg width="27" height="27"><use href="#book"/></svg><span data-w="106" style="margin-left:8px">SplitWiser</span>
 <svg class="ms-auto" width="206" height="22" viewBox="0 0 206 22" fill="none" stroke="#000" stroke-width="2"><path d="M0 11h20M185 1l20 20M205 1l-20 20"/><path d="M92 2h18v18H92z" stroke="#ccc"/></svg></div>
 <div class="cmd"><i></i></div>
 <div class="outp"><div><span data-w="896">Successfully deleted 11 Name: bermice Yu Phone: 16262526 Email:  Address:</span></div><div><span data-w="322">no address provided Tags: .</span></div></div>
 <div class="dv" style="margin-top:12px"></div>
 <div class="lst"><div class="lin d-flex">
  <div class="cells">
   <div class="cellx d-flex align-items-center"><svg width="140" height="140"><use href="#ava"/></svg><div class="inf align-self-start"><div class="nm"><span data-w="178">Bernice Yu</span></div><div class="d-flex mt-2" style="gap:10px"><span class="tg"><span data-w="109">colleagues</span></span><span class="tg"><span data-w="72">friends</span></span></div><div class="ph"><span data-w="130">99272758</span></div></div><div class="idx align-self-start"><span data-w="50">#2</span></div></div>
   <div class="cellx alt d-flex align-items-center"><svg width="140" height="140"><use href="#ava"/></svg><div class="inf align-self-start"><div class="nm"><span data-w="301">Charlotte Oliveiro</span></div><div class="d-flex mt-2"><span class="tg"><span data-w="118">neighbours</span></span></div><div class="ph"><span data-w="130">93210283</span></div></div><div class="idx align-self-start"><span data-w="50">#3</span></div></div>
   <div class="cellx d-flex align-items-center"><svg width="140" height="140"><use href="#ava"/></svg><div class="inf align-self-start"><div class="nm"><span data-w="137">David Li</span></div><div class="d-flex mt-2"><span class="tg"><span data-w="65">family</span></span></div><div class="ph"><span data-w="130">91031282</span></div></div><div class="idx align-self-start"><span data-w="50">#4</span></div></div>
   <div class="cellx alt d-flex align-items-center"><svg width="140" height="140"><use href="#ava"/></svg><div class="inf align-self-start"><div class="nm"><span data-w="223">Irfan Ibrahim</span></div><div class="d-flex mt-2"><span class="tg"><span data-w="110">classmates</span></span></div><div class="ph"><span data-w="130">92492021</span></div></div><div class="idx align-self-start"><span data-w="50">#5</span></div></div>
   <div class="cellx d-flex align-items-center"><svg width="140" height="140"><use href="#ava"/></svg><div class="inf align-self-start" style="padding-top:49px"><div class="nm"><span data-w="200">Chee You12</span></div><div class="ph" style="margin-top:12px"><span data-w="145">881188111</span></div></div><div class="idx align-self-start"><span data-w="50">#6</span></div></div>
  </div>
  <div class="trk"><div class="thumb"></div></div>
 </div></div>
 <div class="dv" style="margin-top:12px"></div>
 <div class="stat"><span data-w="274">Context: listing contacts</span></div>
</section>
<script>
// Track each label out or in so that it spans the width given in data-w.
document.querySelectorAll('[data-w]').forEach(function (el) {
  var r = document.createRange();
  r.selectNodeContents(el);
  var gap = (el.dataset.w - r.getBoundingClientRect().width) / el.textContent.length;
  el.style.letterSpacing = gap.toFixed(3) + 'px';
});
</script>
</body>
</html>
